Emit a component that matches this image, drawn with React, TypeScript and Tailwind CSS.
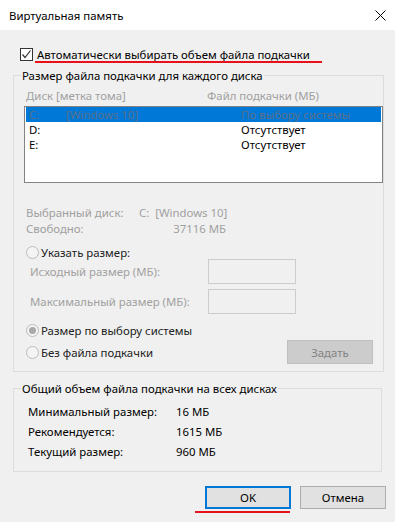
import React from "react";

const listRows = [
  { disk: "C:", label: "[Windows 10]", size: "По выбору системы", selected: true },
  { disk: "D:", label: "", size: "Отсутствует", selected: false },
  { disk: "E:", label: "", size: "Отсутствует", selected: false },
];

const totals = [
  { name: "Минимальный размер:", value: "16 МБ" },
  { name: "Рекомендуется:", value: "1615 МБ" },
  { name: "Текущий размер:", value: "960 МБ" },
];

function Radio({ checked }: { checked?: boolean }) {
  return (
    <span className="w-[13px] h-[13px] rounded-full border border-[#bcbcbc] bg-[#f4f4f4] flex items-center justify-center shrink-0">
      {checked && <span className="w-[7px] h-[7px] rounded-full bg-[#a8a8a8]" />}
    </span>
  );
}

export default function App() {
  return (
    <div className="w-[395px] h-[522px] bg-[#f0f0f0] text-[11.4px] leading-[15px] text-black font-['Noto_Sans',sans-serif] overflow-hidden whitespace-nowrap">
      {/* Title bar */}
      <div className="h-[30px] bg-white flex items-center justify-between pl-[9px] pr-[7px]">
        <span>Виртуальная память</span>
        <svg width="11" height="11" viewBox="0 0 11 11" className="mr-[2px]">
          <path d="M0.5 0.5 L10.5 10.5 M10.5 0.5 L0.5 10.5" stroke="#000" strokeWidth="1" />
        </svg>
      </div>

      {/* Auto checkbox */}
      <div className="relative mt-[17px] h-[14px] flex items-center pl-[20px] gap-[4px]">
        <span className="w-[13px] h-[13px] border border-[#333] bg-white flex items-center justify-center">
          <svg width="11" height="11" viewBox="0 0 11 11">
            <path d="M1.5 5.5 L4 8.5 L9.5 1.5" fill="none" stroke="#333" strokeWidth="1.2" />
          </svg>
        </span>
        <span>Автоматически выбирать объем файла подкачки</span>
        <span className="absolute left-[35px] top-[14px] w-[287px] h-[2px] bg-[#e8101a]" />
      </div>

      {/* Per-disk group */}
      <fieldset className="mt-[7px] mx-[13px] w-[369px] border border-[#dcdcdc] pb-[7px]">
        <legend className="ml-[7px] px-[1px] h-[15px]">Размер файла подкачки для каждого диска</legend>

        <div className="mt-[5px] h-[14px] flex items-center text-[#a0a0a0]">
          <span className="pl-[12px] w-[193px]">Диск [метка тома]</span>
          <span>Файл подкачки (МБ)</span>
        </div>

        <div className="mt-[4px] ml-[10px] w-[359px] h-[77px] border border-[#828282] bg-white px-[1px]">
          {listRows.map((r) => (
            <div
              key={r.disk}
              className={`h-[15px] flex items-center ${r.selected ? "bg-[#0078d7] text-[#5d6f88]" : "text-black"}`}
            >
              <span className="pl-[3px] w-[40px]">{r.disk}</span>
              <span className="w-[175px]">{r.label}</span>
              <span>{r.size}</span>
            </div>
          ))}
        </div>

        <div className="mt-[22px] h-[14px] flex items-center text-[#a0a0a0] pl-[12px]">
          <span className="w-[113px]">Выбранный диск:</span>
          <span>C:&nbsp;&nbsp;[Windows 10]</span>
        </div>
        <div className="mt-[2px] h-[14px] flex items-center text-[#a0a0a0] pl-[12px]">
          <span className="w-[140px]">Свободно:</span>
          <span className="w-[60px] text-right">37116 МБ</span>
        </div>

        <div className="mt-[11px] h-[13px] flex items-center pl-[12px] gap-[2px] text-[#222]">
          <Radio />
          <span>Указать размер:</span>
        </div>

        <div className="h-[25px] flex items-center text-[#a0a0a0] pl-[16px]">
          <span className="w-[178px]">Исходный размер (МБ):</span>
          <span className="w-[88px] h-[25px] border border-[#cccccc] bg-[#f0f0f0]" />
        </div>
        <div className="mt-[5px] h-[25px] flex items-center text-[#a0a0a0] pl-[16px]">
          <span className="w-[178px]">Максимальный размер (МБ):</span>
          <span className="w-[88px] h-[25px] border border-[#cccccc] bg-[#f0f0f0]" />
        </div>

        <div className="mt-[9px] h-[14px] flex items-center pl-[12px] gap-[2px] text-[#222]">
          <Radio checked />
          <span>Размер по выбору системы</span>
        </div>

        <div className="mt-[3px] h-[24px] flex items-center pl-[12px] text-[#222]">
          <div className="flex items-center gap-[2px] w-[261px]">
            <Radio />
            <span>Без файла подкачки</span>
          </div>
          <button className="w-[86px] h-[24px] bg-[#cccccc] border border-[#bfbfbf] text-[#838383]">
            Задать
          </button>
        </div>
      </fieldset>

      {/* Totals group */}
      <fieldset className="mt-[9px] mx-[13px] w-[369px] border border-[#dcdcdc] pb-[10px]">
        <legend className="ml-[7px] px-[1px] h-[15px]">Общий объем файла подкачки на всех дисках</legend>
        <div className="mt-[5px]">
          {totals.map((t) => (
            <div key={t.name} className="h-[20px] flex items-center pl-[14px]">
              <span className="w-[148px]">{t.name}</span>
              <span>{t.value}</span>
            </div>
          ))}
        </div>
      </fieldset>

      {/* Dialog buttons */}
      <div className="relative mt-[14px] flex pl-[205px] gap-[9px]">
        <button className="w-[86px] h-[23px] bg-[#e1e1e1] border-2 border-[#0078d7]">OK</button>
        <button className="w-[86px] h-[23px] bg-[#e1e1e1] border border-[#adadad]">Отмена</button>
        <span className="absolute left-[195px] top-[25px] w-[95px] h-[2px] bg-[#e8101a]" />
      </div>
    </div>
  );
}
